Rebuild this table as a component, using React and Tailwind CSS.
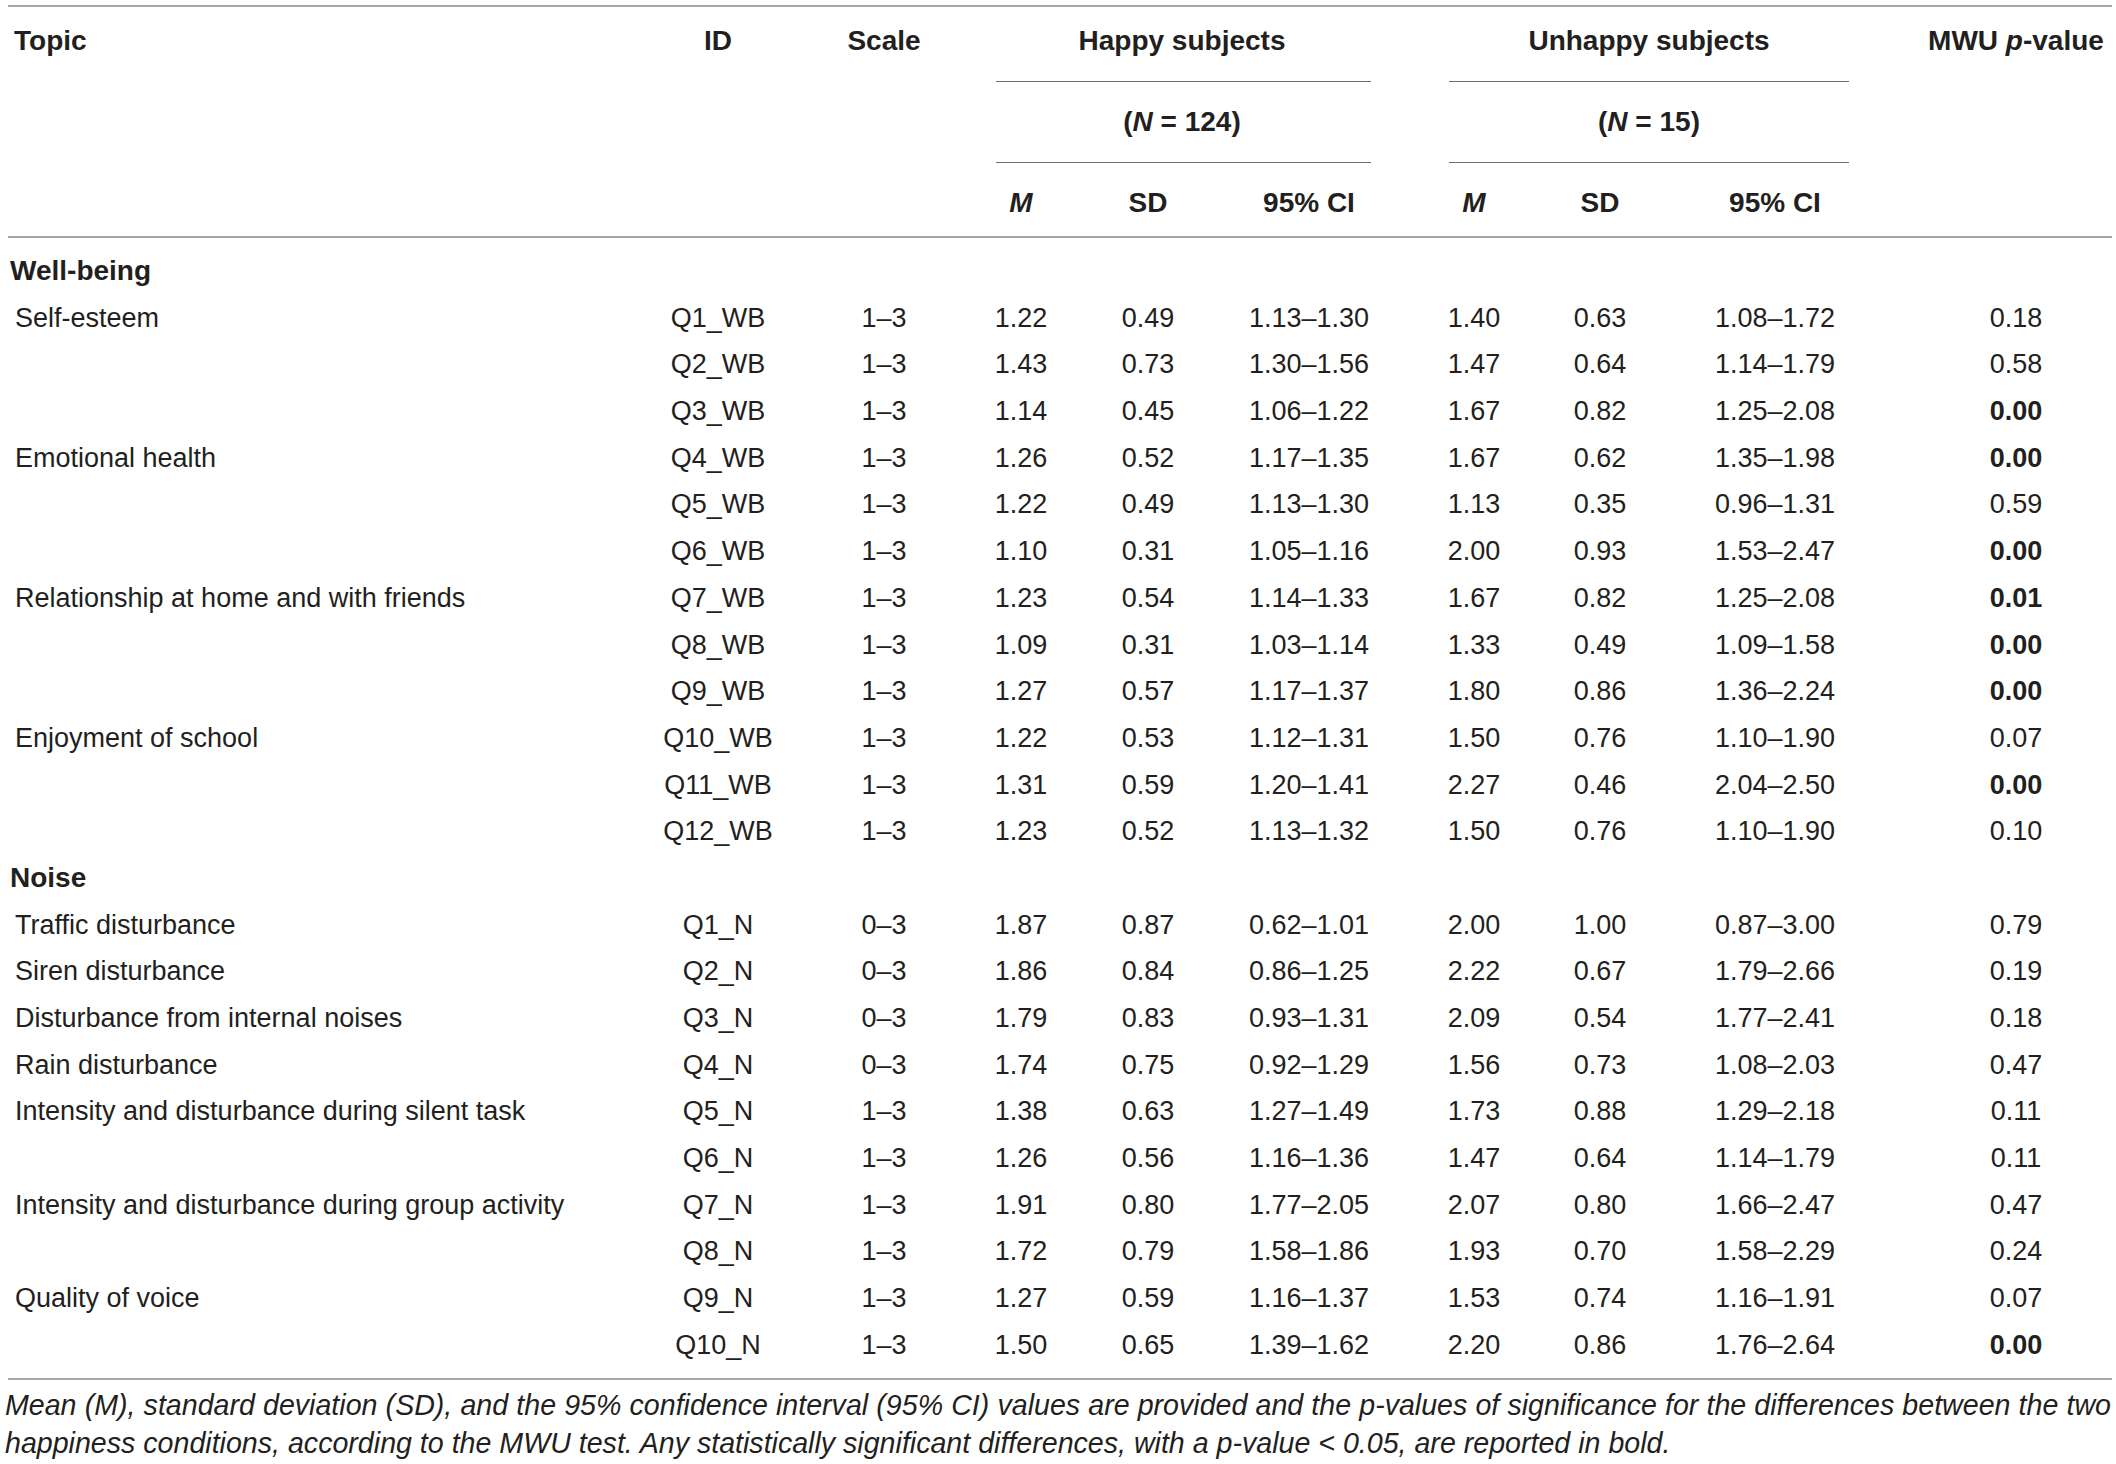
import React from "react";

const cols =
  "grid grid-cols-[632px_156px_176px_98px_156px_166px_164px_88px_262px_206px]";

const rows = [
  { section: "Well-being" },
  ["Self-esteem", "Q1_WB", "1–3", "1.22", "0.49", "1.13–1.30", "1.40", "0.63", "1.08–1.72", "0.18"],
  ["", "Q2_WB", "1–3", "1.43", "0.73", "1.30–1.56", "1.47", "0.64", "1.14–1.79", "0.58"],
  ["", "Q3_WB", "1–3", "1.14", "0.45", "1.06–1.22", "1.67", "0.82", "1.25–2.08", "0.00", true],
  ["Emotional health", "Q4_WB", "1–3", "1.26", "0.52", "1.17–1.35", "1.67", "0.62", "1.35–1.98", "0.00", true],
  ["", "Q5_WB", "1–3", "1.22", "0.49", "1.13–1.30", "1.13", "0.35", "0.96–1.31", "0.59"],
  ["", "Q6_WB", "1–3", "1.10", "0.31", "1.05–1.16", "2.00", "0.93", "1.53–2.47", "0.00", true],
  ["Relationship at home and with friends", "Q7_WB", "1–3", "1.23", "0.54", "1.14–1.33", "1.67", "0.82", "1.25–2.08", "0.01", true],
  ["", "Q8_WB", "1–3", "1.09", "0.31", "1.03–1.14", "1.33", "0.49", "1.09–1.58", "0.00", true],
  ["", "Q9_WB", "1–3", "1.27", "0.57", "1.17–1.37", "1.80", "0.86", "1.36–2.24", "0.00", true],
  ["Enjoyment of school", "Q10_WB", "1–3", "1.22", "0.53", "1.12–1.31", "1.50", "0.76", "1.10–1.90", "0.07"],
  ["", "Q11_WB", "1–3", "1.31", "0.59", "1.20–1.41", "2.27", "0.46", "2.04–2.50", "0.00", true],
  ["", "Q12_WB", "1–3", "1.23", "0.52", "1.13–1.32", "1.50", "0.76", "1.10–1.90", "0.10"],
  { section: "Noise" },
  ["Traffic disturbance", "Q1_N", "0–3", "1.87", "0.87", "0.62–1.01", "2.00", "1.00", "0.87–3.00", "0.79"],
  ["Siren disturbance", "Q2_N", "0–3", "1.86", "0.84", "0.86–1.25", "2.22", "0.67", "1.79–2.66", "0.19"],
  ["Disturbance from internal noises", "Q3_N", "0–3", "1.79", "0.83", "0.93–1.31", "2.09", "0.54", "1.77–2.41", "0.18"],
  ["Rain disturbance", "Q4_N", "0–3", "1.74", "0.75", "0.92–1.29", "1.56", "0.73", "1.08–2.03", "0.47"],
  ["Intensity and disturbance during silent task", "Q5_N", "1–3", "1.38", "0.63", "1.27–1.49", "1.73", "0.88", "1.29–2.18", "0.11"],
  ["", "Q6_N", "1–3", "1.26", "0.56", "1.16–1.36", "1.47", "0.64", "1.14–1.79", "0.11"],
  ["Intensity and disturbance during group activity", "Q7_N", "1–3", "1.91", "0.80", "1.77–2.05", "2.07", "0.80", "1.66–2.47", "0.47"],
  ["", "Q8_N", "1–3", "1.72", "0.79", "1.58–1.86", "1.93", "0.70", "1.58–2.29", "0.24"],
  ["Quality of voice", "Q9_N", "1–3", "1.27", "0.59", "1.16–1.37", "1.53", "0.74", "1.16–1.91", "0.07"],
  ["", "Q10_N", "1–3", "1.50", "0.65", "1.39–1.62", "2.20", "0.86", "1.76–2.64", "0.00", true],
];

function Group({ title, n, left, right, inner }) {
  return (
    <div className="flex flex-col">
      <div className="h-[74px] leading-[68px] text-center">{title}</div>
      <div className={`h-px bg-[#6e6e6e] ${left} ${right}`} />
      <div className="h-[80px] leading-[80px] text-center">
        (<i>N</i> = {n})
      </div>
      <div className={`h-px bg-[#6e6e6e] ${left} ${right}`} />
      <div className={`${inner} pt-[7px] h-[73px] leading-[66px] text-center`}>
        <div>
          <i>M</i>
        </div>
        <div>SD</div>
        <div>95% CI</div>
      </div>
    </div>
  );
}

export default function App() {
  return (
    <div className="bg-white min-h-screen px-[5px] pt-[5px] text-[#231f20] font-['Liberation_Sans',Arial,sans-serif]">
      <div className="ml-[3px] w-[2104px]">
        {/* header */}
        <div className="flex border-t-2 border-b-2 border-[#a6a6a6] text-[28px] font-bold">
          <div className="w-[632px] pl-[6px] leading-[68px]">Topic</div>
          <div className="w-[156px] text-center leading-[68px]">ID</div>
          <div className="w-[176px] text-center leading-[68px]">Scale</div>
          <div className="w-[420px]">
            <Group
              title="Happy subjects"
              n="124"
              left="ml-[24px]"
              right="mr-[21px]"
              inner="grid grid-cols-[98px_156px_166px]"
            />
          </div>
          <div className="w-[514px]">
            <Group
              title="Unhappy subjects"
              n="15"
              left="ml-[57px]"
              right="mr-[57px]"
              inner="grid grid-cols-[164px_88px_262px]"
            />
          </div>
          <div className="w-[206px] pl-[14px] text-center leading-[68px] whitespace-nowrap">
            MWU <i>p</i>-value
          </div>
        </div>

        {/* body */}
        <div className="pt-[10px] pb-[9px] border-b-2 border-[#a8a8a8] text-[27px]">
          {rows.map((r, i) =>
            r.section ? (
              <div key={i} className="h-[46.7px] leading-[46.7px] pl-[2px] font-bold text-[28px]">
                {r.section}
              </div>
            ) : (
              <div key={i} className={`${cols} h-[46.7px] leading-[46.7px]`}>
                <div className="pl-[7px] whitespace-nowrap">{r[0]}</div>
                {r.slice(1, 9).map((v, j) => (
                  <div key={j} className="text-center">
                    {v}
                  </div>
                ))}
                <div className={`pl-[14px] text-center ${r[10] ? "font-bold" : ""}`}>{r[9]}</div>
              </div>
            )
          )}
        </div>
      </div>

      {/* footnote */}
      <div className="italic text-[28.6px] leading-[38px] pt-[6px] w-[2106px]">
        <div className="text-justify [text-align-last:justify] whitespace-nowrap">
          Mean (M), standard deviation (SD), and the 95% confidence interval (95% CI) values are provided and the p-values of significance for the differences between the two
        </div>
        <div>
          happiness conditions, according to the MWU test. Any statistically significant differences, with a p-value &lt; 0.05, are reported in bold.
        </div>
      </div>
    </div>
  );
}
